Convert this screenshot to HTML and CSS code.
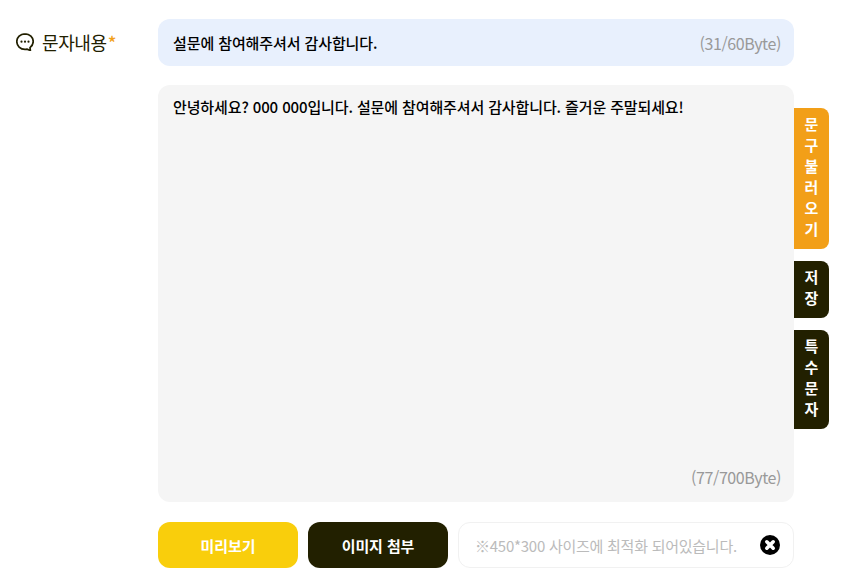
FILE: index.html
```html
<!DOCTYPE html>
<html lang="ko">
<head>
    <meta charset="UTF-8">
    <meta name="viewport" content="width=device-width, initial-scale=1.0">
    <title>문자내용</title>
    <link rel="stylesheet" href="styles.css">
</head>
<body>
    <div class="form-row">
        <div class="form-label">
            <svg class="label-icon" viewBox="0 0 18 18" width="18" height="18">
                <path d="M9 .9C4.200.9.800 4.400.800 8.600c0 4.200 3.400 7.700 8.200 7.700.7 0 1.300-.1 1.900-.2l3.500 1.400-.4-2.900c2-1.400 3.200-3.600 3.200-6C17.200 4.400 13.800.9 9 .9z" fill="none" stroke="#222000" stroke-width="1.700" stroke-linejoin="round"/>
                <circle cx="5.500" cy="8.700" r="1.100" fill="#222000"/>
                <circle cx="9" cy="8.700" r="1.100" fill="#222000"/>
                <circle cx="12.500" cy="8.700" r="1.100" fill="#222000"/>
            </svg>
            <span>문자내용</span><span class="required">*</span>
        </div>
        <div class="form-body">
            <div class="title-box">
                <span>설문에 참여해주셔서 감사합니다.</span>
                <span class="byte-count">(31/60Byte)</span>
            </div>
            <div class="message-box">
                <p class="message-text">안녕하세요? 000 000입니다. 설문에 참여해주셔서 감사합니다. 즐거운 주말되세요!</p>
                <span class="byte-count message-count">(77/700Byte)</span>
                <div class="side-tabs">
                    <button type="button" class="side-tab tab-orange">문<br>구<br>불<br>러<br>오<br>기</button>
                    <button type="button" class="side-tab tab-dark">저<br>장</button>
                    <button type="button" class="side-tab tab-dark">특<br>수<br>문<br>자</button>
                </div>
            </div>
            <div class="button-group">
                <button type="button" class="action-btn preview-btn">미리보기</button>
                <button type="button" class="action-btn attach-btn">이미지 첨부</button>
                <div class="file-box">
                    <span>※450*300 사이즈에 최적화 되어있습니다.</span>
                    <svg class="clear-icon" viewBox="0 0 20 20" width="20" height="20">
                        <circle cx="10" cy="10" r="10" fill="#000"/>
                        <path d="M6.800 6.800l6.400 6.400M13.200 6.800l-6.400 6.400" stroke="#fff" stroke-width="3.600" stroke-linecap="round"/>
                    </svg>
                </div>
            </div>
        </div>
    </div>
</body>
</html>
```
FILE: styles.css
```css
* {
    box-sizing: border-box;
}
body {
    margin: 0;
    padding: 19px 0 0 16px;
    font-family: "Noto Sans CJK KR", "Noto Sans", sans-serif;
    background-color: #fff;
    color: #000;
}
.form-row {
    display: flex;
    width: 778px;
}
.form-label {
    width: 142px;
    flex-shrink: 0;
    display: flex;
    align-items: center;
    height: 45px;
    font-size: 18px;
    color: #222000;
    letter-spacing: -0.4px;
}
.label-icon {
    margin-right: 8px;
}
.required {
    margin-left: 1px;
    font-weight: 500;
    color: #f29f18;
}
.form-body {
    width: 636px;
    display: flex;
    flex-direction: column;
}
.title-box {
    height: 47px;
    padding: 0 13px 0 15px;
    display: flex;
    justify-content: space-between;
    align-items: center;
    background-color: #e8f0fd;
    border-radius: 12px;
    font-size: 15px;
    font-weight: 500;
    letter-spacing: -0.1px;
}
.byte-count {
    font-size: 16px;
    font-weight: 400;
    color: #999;
    letter-spacing: -0.4px;
}
.message-box {
    position: relative;
    height: 417px;
    margin-top: 19px;
    padding: 10px 13px 13px 15px;
    display: flex;
    flex-direction: column;
    justify-content: space-between;
    background-color: #f5f5f5;
    border-radius: 12px;
}
.message-text {
    margin: 0;
    font-size: 15px;
    font-weight: 500;
    line-height: 24px;
    letter-spacing: -0.12px;
}
.message-count {
    align-self: flex-end;
}
.side-tabs {
    position: absolute;
    top: 23px;
    left: 100%;
    display: flex;
    flex-direction: column;
    gap: 12px;
}
.side-tab {
    width: 35px;
    padding: 5px 0 10px;
    border: none;
    border-radius: 0 8px 8px 0;
    font-family: inherit;
    font-size: 15px;
    font-weight: 700;
    line-height: 21px;
    color: #fff;
}
.tab-orange {
    background-color: #f29f18;
}
.tab-dark {
    background-color: #222000;
}
.button-group {
    display: flex;
    gap: 10px;
    margin-top: 20px;
}
.action-btn {
    width: 140px;
    height: 46px;
    border: none;
    border-radius: 12px;
    font-family: inherit;
    font-size: 15px;
    font-weight: 700;
    letter-spacing: -0.1px;
    color: #fff;
}
.preview-btn {
    background-color: #f9ce0c;
}
.attach-btn {
    background-color: #222000;
}
.file-box {
    flex: 1;
    height: 46px;
    padding: 0 13px 0 16px;
    display: flex;
    justify-content: space-between;
    align-items: center;
    border: 1px solid #f1f1f1;
    border-radius: 12px;
    font-size: 15px;
    color: #bbb;
    letter-spacing: -0.25px;
}
```
